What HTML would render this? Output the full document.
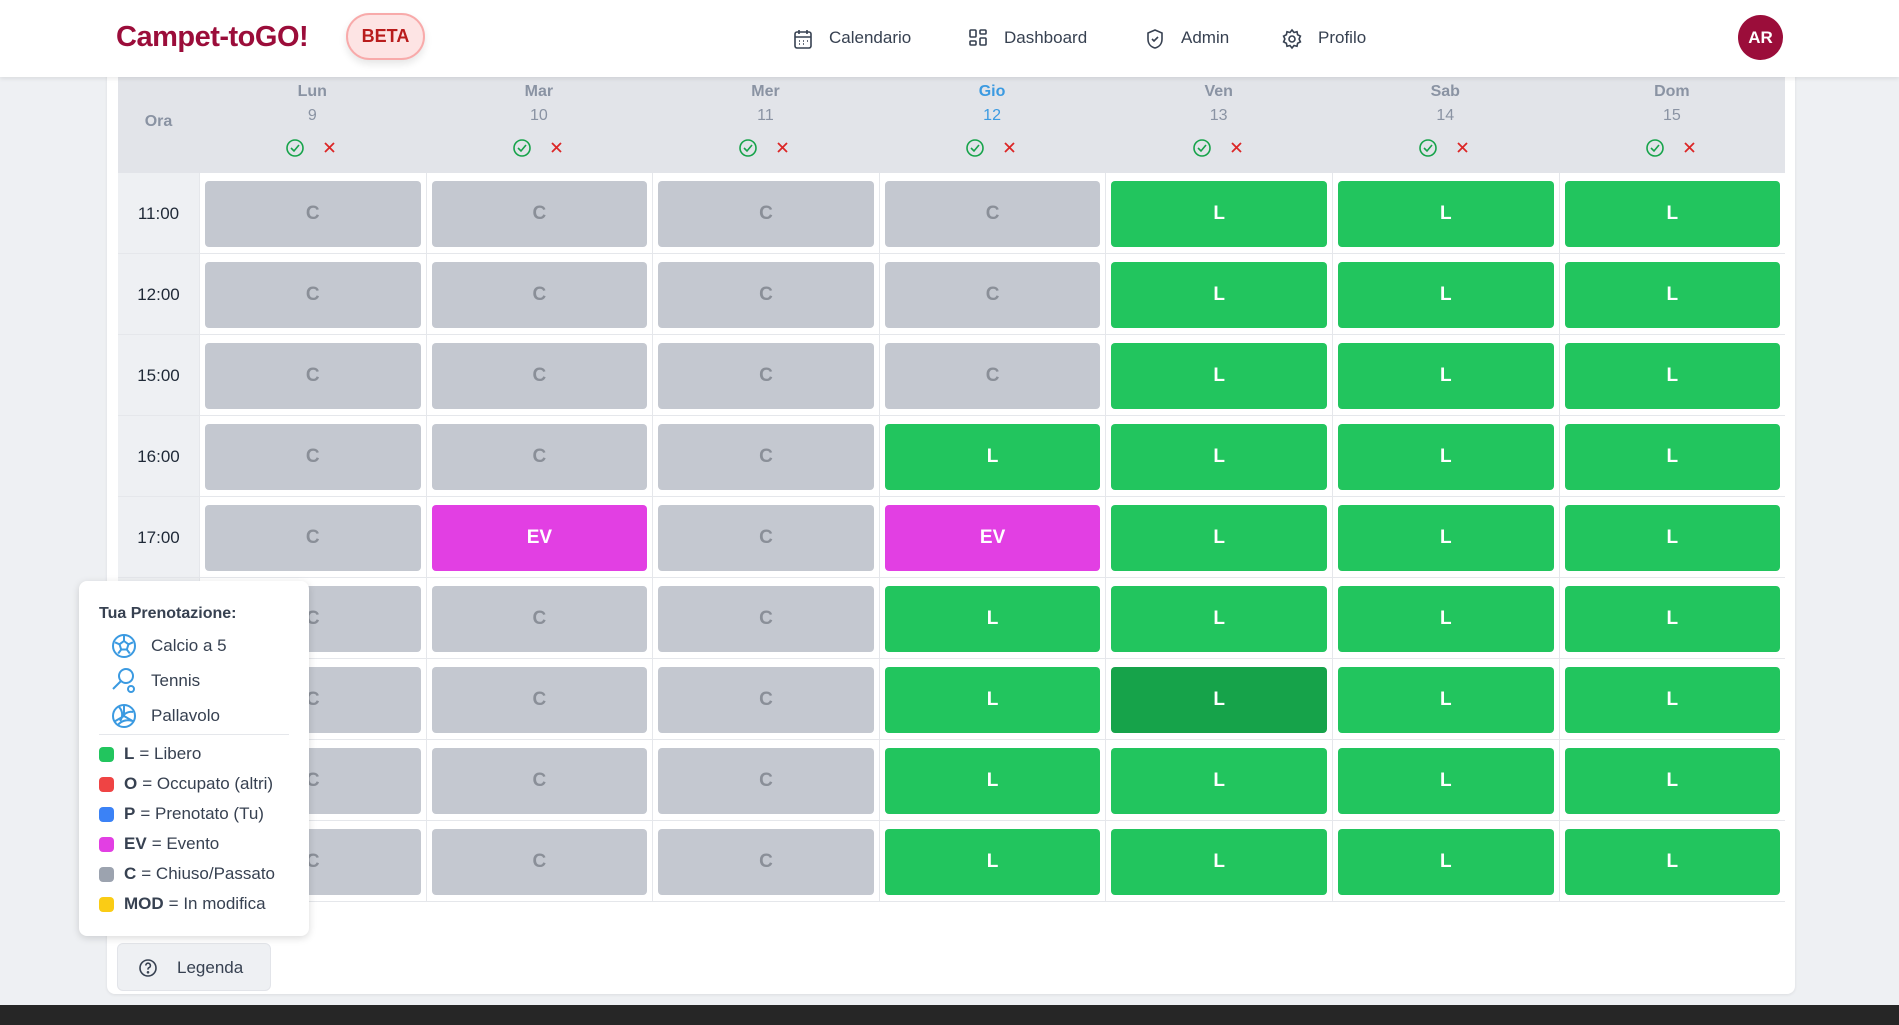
<!DOCTYPE html>
<html><head><meta charset="utf-8"><style>
*{box-sizing:border-box;margin:0;padding:0}
body{width:1899px;height:1025px;overflow:hidden;background:#eef0f3;font-family:"Liberation Sans",sans-serif;position:relative}
.hdr{position:absolute;left:0;top:0;width:1899px;height:77px;background:#fff;box-shadow:0 2px 4px rgba(0,0,0,.08);z-index:5}
.logo{position:absolute;left:116px;top:21px;font-size:29px;font-weight:bold;color:#9b0d3a;letter-spacing:-0.5px}
.beta{position:absolute;left:346px;top:13px;width:79px;height:47px;border-radius:24px;background:#fde4e4;border:2px solid #f8aaaa;color:#b91c1c;font-weight:bold;font-size:18px;text-align:center;line-height:43px;box-shadow:0 4px 8px rgba(0,0,0,.1)}
.nav{position:absolute;top:28px;font-size:17px;color:#374151}
.nav svg{position:absolute;left:-36px;top:0}
.av{position:absolute;left:1738px;top:15px;width:45px;height:45px;border-radius:50%;background:#9b0d3a;color:#fff;font-weight:bold;font-size:17px;text-align:center;line-height:45px}
.card{position:absolute;left:107px;top:60px;width:1688px;height:934px;background:#fff;border-radius:8px;box-shadow:0 1px 3px rgba(0,0,0,.08)}
.grid{position:absolute;left:118px;top:77px;display:grid;grid-template-columns:81px repeat(7,226.6px);grid-template-rows:96px repeat(9,81px)}
.h{background:#e2e4e9;text-align:center;color:#8a93a3;font-size:16px;position:relative}
.h .d{position:absolute;top:6px;width:100%;font-weight:bold}
.h .n{position:absolute;top:30px;width:100%}
.h .ic{position:absolute;top:61px;left:50%;margin-left:-27px;width:56px;height:20px}
.t{background:#eef0f3;border-bottom:1px solid #e5e7eb;display:flex;align-items:center;justify-content:center;font-size:17px;color:#1f2937;padding-top:2px}
.c{border-left:1px solid #e5e7eb;border-bottom:1px solid #e5e7eb;padding:8px 5px 6px 5px}
.c div{width:100%;height:100%;border-radius:4px;display:flex;align-items:center;justify-content:center;font-size:19px;font-weight:bold}
.C div{background:#c4c8d0;color:#8a8f98}
.L div{background:#22c55e;color:#fff}
.D div{background:#16a34a;color:#fff}
.E div{background:#e23fe3;color:#fff}
.leg{position:absolute;left:79px;top:581px;width:230px;height:355px;background:#fff;border-radius:8px;box-shadow:0 2px 8px rgba(0,0,0,.15);z-index:4;font-size:17px;color:#374151}
.leg .ti{position:absolute;left:20px;top:24px;font-weight:bold;font-size:16px}
.sp{position:absolute;left:32px;height:28px;display:flex;align-items:center}
.sp svg{margin-right:14px}
.hr{position:absolute;left:20px;top:153px;width:190px;border-top:1px solid #e5e7eb}
.it{position:absolute;left:20px;display:flex;align-items:center;white-space:nowrap}
.it i{display:inline-block;width:15px;height:15px;border-radius:4px;margin-right:10px}
.it b{color:#374151;margin-right:5px}
.btn{position:absolute;left:117px;top:943px;width:154px;height:48px;background:#eef0f3;border:1px solid #e2e4e9;border-radius:6px;font-size:17px;color:#374151}
.ft{position:absolute;left:0;top:1005px;width:1899px;height:20px;background:#262626}
</style></head><body>
<div class="hdr">
<div class="logo">Campet-toGO!</div>
<div class="beta">BETA</div>
<div class="nav" style="left:829px"><svg width="20" height="22" viewBox="0 0 20 22" fill="none" stroke="#374151" stroke-width="1.6"><rect x="2" y="4" width="16" height="16" rx="2"/><path d="M2 9h16M6 2v4M14 2v4"/><path d="M6 13h1M10 13h1M14 13h1M6 16h1M10 16h1" stroke-width="1.4"/></svg>Calendario</div>
<div class="nav" style="left:1004px"><svg width="20" height="22" viewBox="0 0 20 22" fill="none" stroke="#374151" stroke-width="1.6"><rect x="2" y="2" width="6" height="7" rx="1"/><rect x="12" y="2" width="6" height="4" rx="1"/><rect x="2" y="13" width="6" height="4" rx="1"/><rect x="12" y="10" width="6" height="7" rx="1"/></svg>Dashboard</div>
<div class="nav" style="left:1181px"><svg width="20" height="22" viewBox="0 0 20 22" fill="none" stroke="#374151" stroke-width="1.6"><path d="M10 2l7 3v6c0 5-3 8-7 9-4-1-7-4-7-9V5z"/><path d="M7 11l2 2 4-4"/></svg>Admin</div>
<div class="nav" style="left:1318px"><svg width="20" height="22" viewBox="0 0 20 22" fill="none" stroke="#374151" stroke-width="1.6"><circle cx="10" cy="11" r="3"/><path d="M10 2l2 2.5 3-.8.6 3 2.8 1.4-1.3 2.9 1.3 2.9-2.8 1.4-.6 3-3-.8L10 20l-2-2.5-3 .8-.6-3L1.6 13.9l1.3-2.9L1.6 8.1l2.8-1.4.6-3 3 .8z"/></svg>Profilo</div>
<div class="av">AR</div>
</div>
<div class="card"></div>
<div class="grid">
<div class="h"><div style="position:absolute;top:36px;width:100%;font-weight:bold">Ora</div></div>
<div class="h"><div class="d">Lun</div><div class="n">9</div><svg class="ic"><circle cx="10" cy="10" r="8" fill="none" stroke="#16a34a" stroke-width="1.6"/><path d="M6 10l3 3 5-6" fill="none" stroke="#16a34a" stroke-width="1.6"/><path d="M40 5l9 9M49 5l-9 9" stroke="#dc2626" stroke-width="1.8"/></svg></div>
<div class="h"><div class="d">Mar</div><div class="n">10</div><svg class="ic"><circle cx="10" cy="10" r="8" fill="none" stroke="#16a34a" stroke-width="1.6"/><path d="M6 10l3 3 5-6" fill="none" stroke="#16a34a" stroke-width="1.6"/><path d="M40 5l9 9M49 5l-9 9" stroke="#dc2626" stroke-width="1.8"/></svg></div>
<div class="h"><div class="d">Mer</div><div class="n">11</div><svg class="ic"><circle cx="10" cy="10" r="8" fill="none" stroke="#16a34a" stroke-width="1.6"/><path d="M6 10l3 3 5-6" fill="none" stroke="#16a34a" stroke-width="1.6"/><path d="M40 5l9 9M49 5l-9 9" stroke="#dc2626" stroke-width="1.8"/></svg></div>
<div class="h" style="color:#3b9ae1"><div class="d">Gio</div><div class="n">12</div><svg class="ic"><circle cx="10" cy="10" r="8" fill="none" stroke="#16a34a" stroke-width="1.6"/><path d="M6 10l3 3 5-6" fill="none" stroke="#16a34a" stroke-width="1.6"/><path d="M40 5l9 9M49 5l-9 9" stroke="#dc2626" stroke-width="1.8"/></svg></div>
<div class="h"><div class="d">Ven</div><div class="n">13</div><svg class="ic"><circle cx="10" cy="10" r="8" fill="none" stroke="#16a34a" stroke-width="1.6"/><path d="M6 10l3 3 5-6" fill="none" stroke="#16a34a" stroke-width="1.6"/><path d="M40 5l9 9M49 5l-9 9" stroke="#dc2626" stroke-width="1.8"/></svg></div>
<div class="h"><div class="d">Sab</div><div class="n">14</div><svg class="ic"><circle cx="10" cy="10" r="8" fill="none" stroke="#16a34a" stroke-width="1.6"/><path d="M6 10l3 3 5-6" fill="none" stroke="#16a34a" stroke-width="1.6"/><path d="M40 5l9 9M49 5l-9 9" stroke="#dc2626" stroke-width="1.8"/></svg></div>
<div class="h"><div class="d">Dom</div><div class="n">15</div><svg class="ic"><circle cx="10" cy="10" r="8" fill="none" stroke="#16a34a" stroke-width="1.6"/><path d="M6 10l3 3 5-6" fill="none" stroke="#16a34a" stroke-width="1.6"/><path d="M40 5l9 9M49 5l-9 9" stroke="#dc2626" stroke-width="1.8"/></svg></div>

<div class="t">11:00</div><div class="c C"><div>C</div></div><div class="c C"><div>C</div></div><div class="c C"><div>C</div></div><div class="c C"><div>C</div></div><div class="c L"><div>L</div></div><div class="c L"><div>L</div></div><div class="c L"><div>L</div></div>
<div class="t">12:00</div><div class="c C"><div>C</div></div><div class="c C"><div>C</div></div><div class="c C"><div>C</div></div><div class="c C"><div>C</div></div><div class="c L"><div>L</div></div><div class="c L"><div>L</div></div><div class="c L"><div>L</div></div>
<div class="t">15:00</div><div class="c C"><div>C</div></div><div class="c C"><div>C</div></div><div class="c C"><div>C</div></div><div class="c C"><div>C</div></div><div class="c L"><div>L</div></div><div class="c L"><div>L</div></div><div class="c L"><div>L</div></div>
<div class="t">16:00</div><div class="c C"><div>C</div></div><div class="c C"><div>C</div></div><div class="c C"><div>C</div></div><div class="c L"><div>L</div></div><div class="c L"><div>L</div></div><div class="c L"><div>L</div></div><div class="c L"><div>L</div></div>
<div class="t">17:00</div><div class="c C"><div>C</div></div><div class="c E"><div>EV</div></div><div class="c C"><div>C</div></div><div class="c E"><div>EV</div></div><div class="c L"><div>L</div></div><div class="c L"><div>L</div></div><div class="c L"><div>L</div></div>
<div class="t">18:00</div><div class="c C"><div>C</div></div><div class="c C"><div>C</div></div><div class="c C"><div>C</div></div><div class="c L"><div>L</div></div><div class="c L"><div>L</div></div><div class="c L"><div>L</div></div><div class="c L"><div>L</div></div>
<div class="t">19:00</div><div class="c C"><div>C</div></div><div class="c C"><div>C</div></div><div class="c C"><div>C</div></div><div class="c L"><div>L</div></div><div class="c D"><div>L</div></div><div class="c L"><div>L</div></div><div class="c L"><div>L</div></div>
<div class="t">20:00</div><div class="c C"><div>C</div></div><div class="c C"><div>C</div></div><div class="c C"><div>C</div></div><div class="c L"><div>L</div></div><div class="c L"><div>L</div></div><div class="c L"><div>L</div></div><div class="c L"><div>L</div></div>
<div class="t">21:00</div><div class="c C"><div>C</div></div><div class="c C"><div>C</div></div><div class="c C"><div>C</div></div><div class="c L"><div>L</div></div><div class="c L"><div>L</div></div><div class="c L"><div>L</div></div><div class="c L"><div>L</div></div>
</div>

<div class="leg">
<div class="ti">Tua Prenotazione:</div>
<div class="sp" style="top:51px"><svg width="26" height="26" viewBox="0 0 26 26" fill="none" stroke="#3b9ae1" stroke-width="2"><circle cx="13" cy="13" r="11"/><path d="M13 8l4.5 3.3-1.7 5.2h-5.6L8.5 11.3z"/><path d="M13 8V3M17.5 11.3l4.5-2M15.8 16.5l3 4M10.2 16.5l-3 4M8.5 11.3l-4.5-2"/></svg>Calcio a 5</div>
<div class="sp" style="top:86px"><svg width="26" height="28" viewBox="0 0 26 28" fill="none" stroke="#3b9ae1" stroke-width="2"><circle cx="15" cy="9" r="7"/><path d="M10 14L2 22"/><circle cx="20" cy="22" r="3"/></svg>Tennis</div>
<div class="sp" style="top:121px"><svg width="26" height="26" viewBox="0 0 26 26" fill="none" stroke="#3b9ae1" stroke-width="2"><circle cx="13" cy="13" r="11"/><path d="M13 13V2M13 13l-9.5 5.5M13 13l9.5 5.5M8 4c4 4 4 10 1 14M22 9c-5-1-10 2-12 7M7 22c3-4 9-6 14-4"/></svg>Pallavolo</div>
<div class="hr"></div>
<div class="it" style="top:163px"><i style="background:#22c55e"></i><b>L</b>= Libero</div>
<div class="it" style="top:193px"><i style="background:#ef4444"></i><b>O</b>= Occupato (altri)</div>
<div class="it" style="top:223px"><i style="background:#3b82f6"></i><b>P</b>= Prenotato (Tu)</div>
<div class="it" style="top:253px"><i style="background:#e23fe3"></i><b>EV</b>= Evento</div>
<div class="it" style="top:283px"><i style="background:#9ca3af"></i><b>C</b>= Chiuso/Passato</div>
<div class="it" style="top:313px"><i style="background:#facc15"></i><b>MOD</b>= In modifica</div>
</div>
<div class="btn"><svg style="position:absolute;left:20px;top:14px" width="20" height="20" viewBox="0 0 20 20" fill="none" stroke="#374151" stroke-width="1.6"><circle cx="10" cy="10" r="8"/><path d="M7.8 7.5a2.3 2.3 0 1 1 3 2.2c-.6.3-.8.7-.8 1.3v.6"/><circle cx="10" cy="14.3" r=".5" fill="#374151"/></svg><span style="position:absolute;left:59px;top:14px">Legenda</span></div>
<div class="ft"></div>
</body></html>
